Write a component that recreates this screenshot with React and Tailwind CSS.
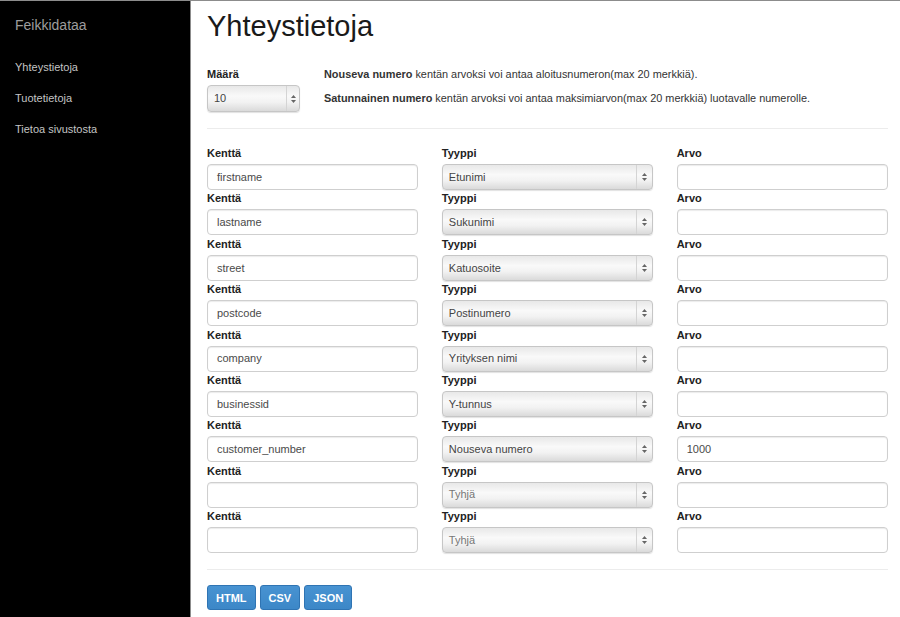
import React from "react";

const ROWS = [
  { field: "firstname", type: "Etunimi", value: "" },
  { field: "lastname", type: "Sukunimi", value: "" },
  { field: "street", type: "Katuosoite", value: "" },
  { field: "postcode", type: "Postinumero", value: "" },
  { field: "company", type: "Yrityksen nimi", value: "" },
  { field: "businessid", type: "Y-tunnus", value: "" },
  { field: "customer_number", type: "Nouseva numero", value: "1000" },
  { field: "", type: "Tyhjä", value: "" },
  { field: "", type: "Tyhjä", value: "" },
];

const Arrows = () => (
  <svg width="5" height="8" viewBox="0 0 5 8" className="block">
    <path d="M2.5 0 L5 3 L0 3 Z" fill="#666" />
    <path d="M2.5 8 L5 5 L0 5 Z" fill="#666" />
  </svg>
);

const FakeSelect = ({ text, muted = false, h = "h-[26px]", arrowW = "w-[16px]" }) => (
  <div
    className={`flex items-stretch ${h} rounded-[4px] border border-[#c6c6c6] bg-[linear-gradient(to_bottom,#e8e8e8,#f9f9f9_40%,#f2f2f2_65%,#dadada)] shadow-[0_1px_1px_rgba(0,0,0,0.12)]`}
  >
    <span className={`flex-1 flex items-center pl-[6px] text-[11px] ${muted ? "text-[#777]" : "text-[#444]"}`}>
      {text}
    </span>
    <span className={`${arrowW} flex items-center justify-center border-l border-[#d4d4d4]`}>
      <Arrows />
    </span>
  </div>
);

const TextInput = ({ value }) => (
  <div className="h-[26px] rounded-[4px] border border-[#cfcfcf] bg-white shadow-[inset_0_1px_1px_rgba(0,0,0,0.08)] flex items-center pl-[9px] text-[11px] text-[#4a4a4a]">
    {value}
  </div>
);

const Label = ({ children }) => (
  <div className="text-[11px] leading-[15px] font-bold text-[#222] mb-[3px]">{children}</div>
);

const Sidebar = () => (
  <aside className="w-[191px] shrink-0 bg-black border-r border-[#8c8c8c] pl-[15px] pt-[14px]">
    <div className="text-[14px] leading-[20px] text-[#9d9d9d]">Feikkidataa</div>
    <nav className="mt-[17px] flex flex-col">
      {["Yhteystietoja", "Tuotetietoja", "Tietoa sivustosta"].map((item) => (
        <a key={item} className="text-[11px] leading-[31px] text-[#c4c4c4]">
          {item}
        </a>
      ))}
    </nav>
  </aside>
);

export default function App() {
  return (
    <div
      className="flex min-h-screen w-full border-t border-[#8c8c8c] bg-white"
      style={{ fontFamily: '"Liberation Sans", Arial, sans-serif' }}
    >
      <Sidebar />

      <main className="flex-1 pl-[16px] pr-[12px] pt-[9px]">
        <h1 className="text-[29px] leading-[32px] text-[#1a1a1a]">Yhteystietoja</h1>

        {/* Määrä + help text */}
        <div className="mt-[25px] flex gap-[24px]">
          <div className="w-[93px]">
            <Label>Määrä</Label>
            <FakeSelect text="10" h="h-[27px]" arrowW="w-[13px]" />
          </div>
          <div className="text-[10.9px] leading-[15px] text-[#333]">
            <p className="mb-[9px]">
              <b>Nouseva numero</b> kentän arvoksi voi antaa aloitusnumeron(max 20 merkkiä).
            </p>
            <p>
              <b>Satunnainen numero</b> kentän arvoksi voi antaa maksimiarvon(max 20 merkkiä) luotavalle numerolle.
            </p>
          </div>
        </div>

        <hr className="mt-[16px] border-t border-[#ececec]" />

        <div className="mt-[17px] grid grid-cols-3 gap-x-[23.5px]">
          {ROWS.map((row, i) => (
            <React.Fragment key={i}>
              <div className="h-[45.375px]">
                <Label>Kenttä</Label>
                <TextInput value={row.field} />
              </div>
              <div className="h-[45.375px]">
                <Label>Tyyppi</Label>
                <FakeSelect text={row.type} muted={row.type === "Tyhjä"} />
              </div>
              <div className="h-[45.375px]">
                <Label>Arvo</Label>
                <TextInput value={row.value} />
              </div>
            </React.Fragment>
          ))}
        </div>

        <hr className="mt-[15px] border-t border-[#ececec]" />

        <div className="mt-[15px] flex gap-[4px]">
          {["HTML", "CSV", "JSON"].map((b) => (
            <button
              key={b}
              className="h-[25px] px-[8px] rounded-[3px] border border-[#2f74b3] bg-[linear-gradient(to_bottom,#4893d2,#3c87c7)] text-[11px] font-bold text-white"
            >
              {b}
            </button>
          ))}
        </div>
      </main>
    </div>
  );
}
